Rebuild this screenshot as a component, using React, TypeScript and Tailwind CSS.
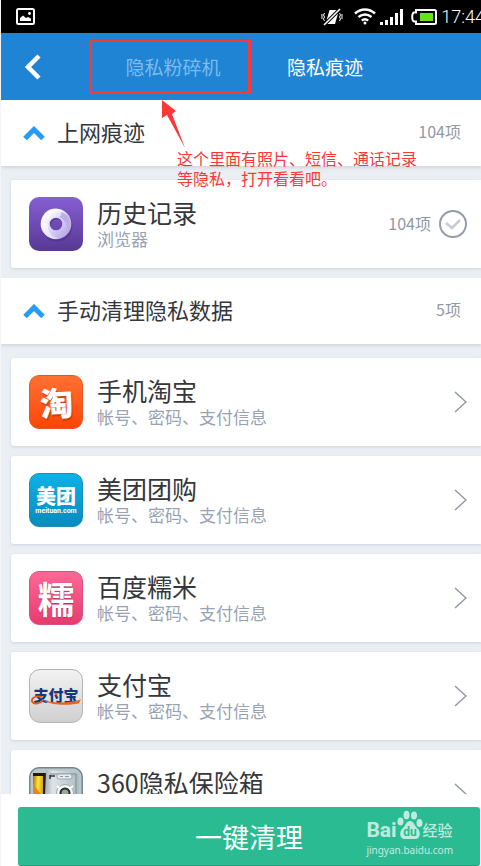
import { useState, type ReactNode } from "react";

interface AppItem {
  name: string;
  icon: ReactNode;
}

const DETAIL = "帐号、密码、支付信息";

function TaobaoIcon() {
  return (
    <div className="flex size-[54px] shrink-0 items-center justify-center rounded-[10px] border border-[#e2562a] bg-linear-to-b from-[#ff7031] to-[#fb4500] text-white">
      <span className="-rotate-3 text-[33px] leading-[52px] font-black text-shadow-[1px_2px_1px_rgba(160,40,0,0.5)]">淘</span>
    </div>
  );
}

function MeituanIcon() {
  return (
    <div className="flex size-[54px] shrink-0 flex-col items-center justify-center rounded-[10px] border border-[#188db5] bg-linear-to-b from-[#0cb2e8] to-[#078bbd] text-white">
      <span className="text-[20px] leading-[22px] font-black">美团</span>
      <span className="font-[Roboto] text-[7px] leading-[9px] font-bold">meituan.com</span>
    </div>
  );
}

function NuomiIcon() {
  return (
    <div className="flex size-[54px] shrink-0 items-center justify-center rounded-[10px] border border-[#d4527f] bg-linear-to-b from-[#fd6795] to-[#e63b70] text-white">
      <span className="text-[37px] leading-[50px] font-bold text-shadow-[0_1px_1px_rgba(140,20,60,0.5)]">糯</span>
    </div>
  );
}

function AlipayIcon() {
  return (
    <div className="relative flex size-[54px] shrink-0 justify-center rounded-[11px] border border-[#b4b4b4] bg-linear-to-b from-[#f2f2f2] to-[#d0d0d0] text-[#16377c]">
      <span className="pt-4 text-[15px] leading-[18px] font-black">支付宝</span>
      <svg viewBox="0 0 54 54" className="absolute -top-px -left-px size-[54px]" aria-hidden="true">
        <path
          d="M13 28C7 26 2 29 3 32.500C5 36 11 35 14 31"
          fill="none"
          stroke="#e65a18"
          strokeWidth="1.800"
          strokeLinecap="round"
        />
        <path d="M13 31C24 34.500 40 34 52 30.500L49.500 34.500C38 36.500 23 36.500 13 31Z" fill="#e9641d" />
        <circle cx="27" cy="25" r="1.300" fill="#e65a18" />
      </svg>
    </div>
  );
}

function SafeIcon() {
  return (
    <svg viewBox="0 0 54 54" className="size-[54px] shrink-0" aria-hidden="true">
      <defs>
        <linearGradient id="door" x1="0" y1="0" x2="1" y2="0">
          <stop offset="0" stopColor="#9ba6ab" />
          <stop offset="0.250" stopColor="#dfe4e6" />
          <stop offset="1" stopColor="#aebbc0" />
        </linearGradient>
        <linearGradient id="gold" x1="0" y1="0" x2="1" y2="0.300">
          <stop offset="0" stopColor="#b66a08" />
          <stop offset="0.500" stopColor="#fbe63a" />
          <stop offset="1" stopColor="#d8a20f" />
        </linearGradient>
      </defs>
      <rect width="54" height="54" rx="10" fill="#71868e" />
      <rect x="1.500" y="1.500" width="51" height="51" rx="8.500" fill="#b9c6ca" />
      <path d="M4 6H17V54H4Z" fill="#211b14" />
      <path d="M4 9H14V50H4Z" fill="url(#gold)" />
      <path d="M4 17L12 27V42H4Z" fill="#e58718" />
      <path d="M17 3L47 5Q50 6 50 10V54H15Z" fill="url(#door)" />
      <path d="M21 7H47V54H21" fill="none" stroke="#7d8b91" />
      <path d="M21 8V12M21 9L26 9" stroke="#30393c" strokeWidth="1.500" />
      <rect x="28" y="7" width="15" height="5" rx="2" fill="#e8eced" stroke="#9aa8ac" />
      <path d="M31 9.500H34M36 9.500H40" stroke="#8b999e" strokeWidth="1" />
      <circle cx="36" cy="26" r="8.500" fill="#f5f7f7" stroke="#9aa8ac" />
      <circle cx="36" cy="26" r="4.500" fill="#96aa9b" stroke="#202d29" strokeWidth="2" />
      <path d="M32 22L28 19M40 22L44 19" stroke="#fff" strokeWidth="2" />
    </svg>
  );
}

function BrowserIcon() {
  return (
    <svg viewBox="0 0 54 54" className="size-[54px] shrink-0" aria-hidden="true">
      <defs>
        <linearGradient id="purple" x1="0" y1="0" x2="0" y2="1">
          <stop offset="0" stopColor="#865fd3" />
          <stop offset="1" stopColor="#573894" />
        </linearGradient>
        <linearGradient id="ring" x1="0" y1="0" x2="1" y2="1">
          <stop offset="0" stopColor="#ffffff" />
          <stop offset="0.600" stopColor="#d6ccf5" />
          <stop offset="1" stopColor="#b9a7e8" />
        </linearGradient>
      </defs>
      <rect width="54" height="54" rx="10" fill="url(#purple)" />
      <circle cx="28" cy="29" r="11" fill="none" stroke="#3c2476" strokeOpacity="0.350" strokeWidth="9" />
      <circle cx="27" cy="27" r="10.800" fill="none" stroke="url(#ring)" strokeWidth="9" />
      <path d="M15 17C20 10 31 10 35 15C27 13 21 17 20 23C18 22 16 20 15 17Z" fill="#fff" fillOpacity="0.650" />
      <path d="M32 15C41 17 44 28 39 35C38 28 36 22 30 20C32 19 33 17 32 15Z" fill="#bcaee9" />
      <path d="M12 24C12 36 20 43 29 42C22 39 18 34 19 27Z" fill="#fff" fillOpacity="0.500" />
    </svg>
  );
}

const apps: AppItem[] = [
  { name: "手机淘宝", icon: <TaobaoIcon /> },
  { name: "美团团购", icon: <MeituanIcon /> },
  { name: "百度糯米", icon: <NuomiIcon /> },
  { name: "支付宝", icon: <AlipayIcon /> },
  { name: "360隐私保险箱", icon: <SafeIcon /> },
];

function StatusBar() {
  return (
    <div className="flex h-[33px] shrink-0 items-center overflow-hidden bg-black pl-[15px] text-white">
      <svg viewBox="0 0 19 17" className="h-[17px] w-[19px] shrink-0" aria-hidden="true">
        <rect x="1" y="1" width="17" height="15" rx="1.500" fill="none" stroke="currentColor" strokeWidth="2" />
        <path d="M4 13V10L7 7.500L10 10L12 9L15 10.500V13Z" fill="currentColor" />
        <circle cx="13.500" cy="5.500" r="1.400" fill="currentColor" />
      </svg>
      <div className="ml-auto flex shrink-0 items-center">
        <svg viewBox="0 0 22 18" className="h-[18px] w-[22px]" aria-hidden="true">
          <path d="M8.500 2H18L14 16H4.500Z" fill="currentColor" />
          <path d="M18.500 1.500L3.500 16.500" stroke="#000" strokeWidth="3.500" />
          <path d="M19 1L3 17" stroke="currentColor" strokeWidth="1.600" />
          <path d="M3.500 5L2.500 7L3.500 9L2.500 11L3.500 13M1 6V11M18.500 5L19.500 7L18.500 9L19.500 11L18.500 13M21 6V11" fill="none" stroke="currentColor" />
        </svg>
        <svg viewBox="0 0 22 17" className="ml-[11px] h-[17px] w-[22px]" fill="none" stroke="currentColor" strokeWidth="2.400" aria-hidden="true">
          <path d="M1 5.500C7 0.200 15 0.200 21 5.500M4.500 9C8.500 5.800 13.500 5.800 17.500 9M7.800 12.500C10 10.800 12 10.800 14.200 12.500" />
          <circle cx="11" cy="15" r="1.500" fill="currentColor" stroke="none" />
        </svg>
        <svg viewBox="0 0 23 16" className="ml-1 h-4 w-[23px]" fill="currentColor" aria-hidden="true">
          <path d="M0 13H3V16H0ZM5 11H8V16H5ZM10 8H13V16H10ZM15 4H18V16H15ZM20 0H23V16H20Z" />
        </svg>
        <svg viewBox="0 0 26 16" className="ml-2 h-4 w-[26px]" aria-hidden="true">
          <path d="M5 1H23.500Q25 1 25 2.500V13.500Q25 15 23.500 15H5V12.500H3Q1.200 12 1.200 8Q1.200 4 3 3.500H5Z" fill="none" stroke="currentColor" strokeWidth="2" />
          <rect x="9" y="4" width="13" height="8" fill="#68e313" />
        </svg>
        <time className="-mr-1 ml-1 font-[Roboto] text-[18px] leading-5 font-light">17:44</time>
      </div>
    </div>
  );
}

function SectionHeader({ title, count, children }: { title: string; count: string; children?: ReactNode }) {
  return (
    <div className="relative z-10 flex h-[66px] items-center bg-white pr-5 pl-[22px] shadow-[0_2px_3px_rgba(0,0,0,0.1)]">
      <svg viewBox="0 0 22 15" className="h-[15px] w-[22px]" aria-hidden="true">
        <path d="M2 12.500L11 3.500L20 12.500" fill="none" stroke="#249cf8" strokeWidth="5" />
      </svg>
      <h2 className="ml-3 pb-1 text-[22px] leading-7 text-[#35373c]">{title}</h2>
      <span className="ml-auto pb-1 text-[16px] leading-6 text-[#9299a5]">{count}</span>
      {children}
    </div>
  );
}

function Card({ name, detail, icon, children }: { name: string; detail: string; icon: ReactNode; children: ReactNode }) {
  return (
    <li className="flex h-[88px] items-center rounded-l-[3px] bg-white pr-[14px] pl-[18px] shadow-[0_1px_3px_rgba(80,100,120,0.2)]">
      {icon}
      <div className="ml-[14px]">
        <h3 className="text-[25px] leading-[30px] text-[#35373c]">{name}</h3>
        <p className="text-[17px] leading-6 text-[#98a2b3]">{detail}</p>
      </div>
      <div className="ml-auto flex items-center">{children}</div>
    </li>
  );
}

function Note() {
  return (
    <div className="absolute top-0 left-[160px] text-[#fb3838]">
      <svg viewBox="0 0 26 48" className="h-12 w-[26px]" aria-hidden="true">
        <path d="M1 0L15 11L11 14L24 48L6 15L1 18Z" fill="currentColor" />
      </svg>
      <p className="ml-4 text-[16px] leading-5 whitespace-nowrap">
        这个里面有照片、短信、通话记录
        <br />
        等隐私，打开看看吧。
      </p>
    </div>
  );
}

function Watermark() {
  return (
    <div className="pointer-events-none absolute top-4 right-7 text-white opacity-70">
      <div className="flex h-8 items-end">
        <span className="font-[Roboto] text-[21px] leading-6 font-bold">Bai</span>
        <svg viewBox="0 0 26 30" className="mb-0.5 h-[30px] w-[26px]" aria-hidden="true">
          <ellipse cx="9.500" cy="5" rx="3" ry="4.300" fill="currentColor" />
          <ellipse cx="17" cy="5.500" rx="3" ry="4" fill="currentColor" />
          <ellipse cx="3.500" cy="11.500" rx="3" ry="4" fill="currentColor" />
          <ellipse cx="22.500" cy="13" rx="3" ry="4" fill="currentColor" />
          <path d="M13 11C17 11 17 15 20 18C24 21 24 29 18 29H8C2 29 2 21 6 18C9 15 9 11 13 11Z" fill="currentColor" />
          <text x="13" y="26" textAnchor="middle" fontFamily="Roboto" fontSize="12" fontWeight="700" fill="#2abb93">
            du
          </text>
        </svg>
        <span className="text-[15px] leading-6 font-medium">经验</span>
      </div>
      <p className="font-['Noto_Sans'] text-[10px] leading-4">jingyan.baidu.com</p>
    </div>
  );
}

export default function App() {
  const [tab, setTab] = useState(1);
  const [checked, setChecked] = useState(false);

  return (
    <div className="flex h-screen flex-col overflow-hidden border-l border-gray-100 bg-[#ebeff4] font-['Noto_Sans_CJK_SC',sans-serif]">
      <StatusBar />
      <header className="flex h-[67px] shrink-0 items-stretch bg-[#1f84d3]">
        <button aria-label="返回" className="w-24 shrink-0 pl-6 text-white">
          <svg viewBox="0 0 16 26" className="h-[26px] w-4" aria-hidden="true">
            <path d="M14 2L3 13L14 24" fill="none" stroke="currentColor" strokeWidth="4.500" />
          </svg>
        </button>
        <nav className="flex">
          {["隐私粉碎机", "隐私痕迹"].map((label, i) => (
            <button
              key={label}
              onClick={() => setTab(i)}
              className={`relative w-[152px] text-[19px] leading-6 ${tab === i ? "text-white" : "text-[#7dbbed]"}`}
            >
              {label}
              {i === 0 && <span className="absolute inset-y-1.5 -right-0.5 -left-2 border-[3px] border-[#fb3838]" />}
            </button>
          ))}
        </nav>
      </header>

      <main className="min-h-0 flex-1 overflow-hidden">
        <section>
          <SectionHeader title="上网痕迹" count="104项">
            <Note />
          </SectionHeader>
          <ul className="pt-[14px] pb-2.5 pl-2.5">
            <Card name="历史记录" detail="浏览器" icon={<BrowserIcon />}>
              <label htmlFor="history" className="pb-0.5 text-[16px] leading-6 text-[#9299a5]">
                104项
              </label>
              <span className="relative ml-2 size-7">
                <input
                  id="history"
                  type="checkbox"
                  checked={checked}
                  onChange={(e) => setChecked(e.target.checked)}
                  className="block size-7 appearance-none rounded-full border-2 border-[#959ca8] checked:border-[#249cf8]"
                />
                <svg viewBox="0 0 28 28" className="pointer-events-none absolute inset-0 size-7" aria-hidden="true">
                  <path d="M7 13L13 18L21 10" fill="none" stroke={checked ? "#249cf8" : "#c8ccd2"} strokeWidth="2.500" />
                </svg>
              </span>
            </Card>
          </ul>
        </section>

        <section>
          <SectionHeader title="手动清理隐私数据" count="5项" />
          <ul className="flex flex-col gap-2.5 pt-[14px] pl-2.5">
            {apps.map((app) => (
              <Card key={app.name} name={app.name} detail={DETAIL} icon={app.icon}>
                <svg viewBox="0 0 13 22" className="h-[22px] w-[13px]" aria-hidden="true">
                  <path d="M1 1L12 11L1 21" fill="none" stroke="#9299a5" strokeWidth="1.500" />
                </svg>
              </Card>
            ))}
          </ul>
        </section>
      </main>

      <footer className="relative z-20 shrink-0 bg-white pt-[13px] pr-px pl-[17px]">
        <button className="block h-[59px] w-full rounded-[3px] border-b border-[#229f7c] bg-[#2abb93] pt-0.5 text-[27px] leading-8 text-white">
          一键清理
        </button>
        <Watermark />
      </footer>
    </div>
  );
}
